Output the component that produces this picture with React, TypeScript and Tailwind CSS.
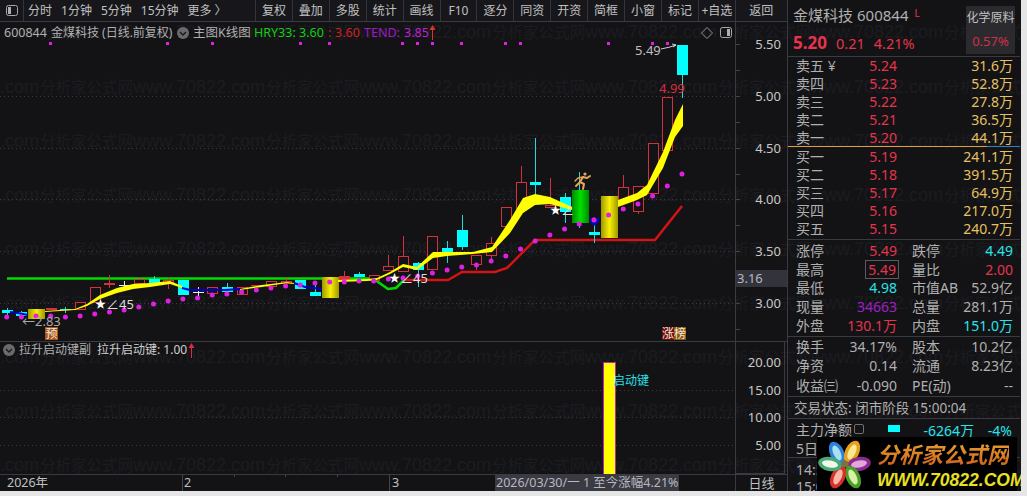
import React from "react";

const X = (i: number) => 6.7 + 14.68 * i;
const CY = "#00ffff";
const RD = "#d4303e";

type C = { i: number; k: "r" | "rf" | "c" | "w"; t: number; b: number; wt?: number; wb?: number };
const candles: C[] = [
  { i: 0, k: "c", t: 310, b: 313, wt: 308, wb: 315 },
  { i: 1, k: "c", t: 312, b: 316, wt: 311, wb: 318 },
  { i: 3, k: "rf", t: 308, b: 310 },
  { i: 4, k: "c", t: 309, b: 310, wt: 307, wb: 313 },
  { i: 5, k: "r", t: 302, b: 309 },
  { i: 6, k: "r", t: 287, b: 302 },
  { i: 7, k: "rf", t: 283, b: 285, wt: 275, wb: 288 },
  { i: 8, k: "w", t: 285, b: 285.5, wt: 281, wb: 290 },
  { i: 9, k: "r", t: 279, b: 283, wt: 277 },
  { i: 10, k: "c", t: 279, b: 285, wt: 276 },
  { i: 11, k: "r", t: 280, b: 283, wt: 277, wb: 289 },
  { i: 12, k: "c", t: 280, b: 295 },
  { i: 13, k: "w", t: 292, b: 292.5, wt: 287, wb: 296 },
  { i: 14, k: "r", t: 287, b: 293 },
  { i: 15, k: "c", t: 287, b: 292, wt: 283, wb: 294 },
  { i: 16, k: "r", t: 287, b: 294 },
  { i: 17, k: "rf", t: 285, b: 286 },
  { i: 18, k: "r", t: 281, b: 286 },
  { i: 19, k: "r", t: 281, b: 283, wt: 277 },
  { i: 20, k: "c", t: 280, b: 289 },
  { i: 21, k: "c", t: 292, b: 296, wt: 282 },
  { i: 23, k: "rf", t: 276, b: 280, wt: 271, wb: 283 },
  { i: 24, k: "c", t: 274, b: 277, wt: 272 },
  { i: 25, k: "r", t: 275, b: 280 },
  { i: 26, k: "r", t: 266, b: 270, wt: 255 },
  { i: 27, k: "r", t: 256, b: 271, wt: 236 },
  { i: 28, k: "c", t: 263, b: 270, wt: 262, wb: 287 },
  { i: 29, k: "r", t: 236, b: 269 },
  { i: 30, k: "c", t: 248, b: 252, wt: 241, wb: 263 },
  { i: 31, k: "c", t: 230, b: 247, wt: 215, wb: 250 },
  { i: 32, k: "r", t: 255, b: 264, wb: 270 },
  { i: 33, k: "r", t: 243, b: 255, wt: 237, wb: 260 },
  { i: 34, k: "r", t: 207, b: 226 },
  { i: 35, k: "r", t: 182, b: 208, wt: 166 },
  { i: 36, k: "c", t: 182, b: 185, wt: 138, wb: 195 },
  { i: 37, k: "r", t: 205, b: 207, wt: 178 },
  { i: 38, k: "c", t: 197, b: 212, wt: 193, wb: 223 },
  { i: 39, k: "c", t: 200, b: 200, wt: 172, wb: 228 },
  { i: 40, k: "c", t: 232, b: 235, wt: 225, wb: 243 },
  { i: 42, k: "r", t: 187, b: 200, wt: 175 },
  { i: 43, k: "r", t: 186, b: 211, wb: 214 },
  { i: 44, k: "r", t: 143, b: 193 },
  { i: 45, k: "r", t: 97, b: 150 },
  { i: 46, k: "c", t: 45, b: 75, wb: 98 },
];

const dots = [317, 317, 316, 316, 317, 316, 314, 312, 310, 307, 304, 301, 299, 298, 295, 294, 292, 290, 288, 286, 285, 283, 282, 282, 281, 281, 279, 278, 276, 273, 270, 267, 265, 261, 256, 249, 241, 235, 229, 224, 220, 215, 209, 204, 196, 186, 174];
const topDots = [50, 167, 212, 300, 329, 402, 417, 432, 461, 505, 520, 608, 652, 667];

const bands: [number, number, number][][] = [
  [[45, 311, 312], [75, 309, 310], [87, 304, 306], [100, 295, 299], [117, 288, 293], [133, 284, 289], [150, 283, 287], [170, 281, 284], [182, 286, 288]],
  [[240, 289, 290], [262, 285, 287], [287, 282, 283], [294, 283, 284]],
  [[338, 280, 282], [367, 279, 281], [377, 278, 280], [390, 272, 274], [403, 264, 267], [417, 267, 270], [433, 252, 258], [447, 252, 256], [473, 252, 254], [492, 247, 252], [510, 220, 233], [523, 198, 213], [535, 194, 205], [550, 197, 204], [572, 207, 210]],
  [[618, 200, 207], [637, 193, 200], [647, 185, 195], [663, 152, 168], [675, 120, 137], [683, 104, 126]],
];
const poly = (b: [number, number, number][]) =>
  b.map((p) => `${p[0]},${p[1]}`).join(" ") + " " + [...b].reverse().map((p) => `${p[0]},${p[2]}`).join(" ");

const wmRows = [32, 87, 141, 195, 249, 303, 357, 411, 465];
const wmCols = [-186, 40, 266, 492, 718, 944];

function Watermark() {
  return (
    <svg className="absolute left-0 top-0 w-[1021px] h-[491px] font-['Liberation_Sans','Noto_Sans_CJK_SC',sans-serif]" viewBox="0 0 1021 491">
      {wmRows.map((y) =>
        wmCols.map((x) => (
          <text key={`${x}-${y}`} x={x} y={y + 6} fill="#1c1c20" fontSize="15.5">
            分析家公式网<tspan fontSize="18">www.70822.com</tspan>
          </text>
        ))
      )}
    </svg>
  );
}

function Circle() {
  return (
    <svg width="12" height="12" viewBox="0 0 12 12" className="shrink-0">
      <circle cx="6" cy="6" r="6" fill="#6a6a6e" />
      <path d="M3 5 L6 8 L9 5" fill="none" stroke="#1a1a1c" strokeWidth="1.4" />
    </svg>
  );
}

function UpArrow({ color }: { color: string }) {
  return (
    <svg width="7" height="15" viewBox="0 0 7 15" className="shrink-0">
      <path d="M3.5 0 L6.5 5 L4 5 L4 15 L3 15 L3 5 L0.5 5 Z" fill={color} />
    </svg>
  );
}

function PanelIcon({ side }: { side: "l" | "r" }) {
  return (
    <svg width="12" height="11" viewBox="0 0 12 11">
      <rect x="0.5" y="0.5" width="11" height="10" rx="2" fill="none" stroke="#a8a8a8" />
      <rect x={side === "l" ? 2 : 7} y="2" width="3" height="7" fill="#b0b0b0" />
    </svg>
  );
}

function Toolbar() {
  const btns = ["复权", "叠加", "多股", "统计", "画线", "F10", "逐分", "同资", "开资", "简框", "小窗", "标记", "+自选"];
  return (
    <div className="flex h-[22px] border-b border-[#3a3a42] bg-[#17171b] text-[12px] text-[#c0c0c0] leading-[21px]">
      <div className="w-[24px] flex items-center justify-center border-r border-[#33343c] pl-[1px]">
        <PanelIcon side="l" />
      </div>
      <div className="w-[232px] flex gap-[9px] pl-[4px] border-r border-[#33343c]">
        <span>分时</span>
        <span>1分钟</span>
        <span>5分钟</span>
        <span>15分钟</span>
        <span>更多 〉</span>
      </div>
      {btns.map((b) => (
        <div key={b} className="w-[36.92px] text-center whitespace-nowrap border-r border-[#33343c]">
          {b}
        </div>
      ))}
      <div className="w-[51px] text-center">返回</div>
    </div>
  );
}

function Header() {
  return (
    <div className="absolute left-[4px] top-[3px] right-0 flex items-center h-[16px] text-[12.5px] text-[#b0b0b0] whitespace-nowrap">
      <span>600844</span>
      <span className="ml-[4px] text-[12px]">金煤科技 (日线.前复权)</span>
      <span className="absolute left-[173px] top-[2px] flex"><Circle /></span>
      <span className="absolute left-[189px] top-0 leading-[16px]">主图K线图</span>
      <span className="absolute left-[250px] top-0 leading-[16px] text-[#10d010]">HRY33:</span>
      <span className="absolute left-[295px] top-0 leading-[16px] text-[#10d010]">3.60</span>
      <span className="absolute left-[324px] top-0 leading-[16px] text-[#d02020]">:</span>
      <span className="absolute left-[331px] top-0 leading-[16px] text-[#d02020]">3.60</span>
      <span className="absolute left-[360px] top-0 leading-[16px] text-[#a018c8]">TEND:</span>
      <span className="absolute left-[400px] top-0 leading-[16px] text-[#c020d8]">3.85</span>
      <span className="absolute left-[425px] top-0 flex"><UpArrow color="#e03030" /></span>
      <svg width="12" height="12" viewBox="0 0 12 12" className="absolute left-[697px] top-[2px]">
        <path d="M6 0.5 L11.5 6 L6 11.5 L0.5 6 Z" fill="none" stroke="#909090" />
      </svg>
      <span className="absolute left-[716px] top-[2px] flex"><PanelIcon side="r" /></span>
    </div>
  );
}

function MainChart() {
  return (
    <svg className="block w-[735px] h-[319px]" viewBox="0 22 735 319">
      <defs>
        <linearGradient id="gold" x1="0" x2="1" y1="0" y2="0">
          <stop offset="0" stopColor="#a09800" />
          <stop offset="0.5" stopColor="#f8f000" />
          <stop offset="1" stopColor="#a09800" />
        </linearGradient>
        <linearGradient id="grn" x1="0" x2="1" y1="0" y2="0">
          <stop offset="0" stopColor="#008a00" />
          <stop offset="0.5" stopColor="#00e000" />
          <stop offset="1" stopColor="#008a00" />
        </linearGradient>
      </defs>
      {[96, 148, 199, 251, 303].map((y) => (
        <line key={y} x1="0" x2="735" y1={y + 0.5} y2={y + 0.5} stroke="#3a3a40" strokeDasharray="1 3" />
      ))}
      {topDots.map((x) => (
        <rect key={x} x={x - 1} y="42" width="3" height="3" fill="#e020e0" />
      ))}
      <polyline points="7,278.5 373,278.5 388,289 396,288 404,280" fill="none" stroke="#00dc00" strokeWidth="2.5" />
      <polyline points="404,280 448,280 462,272 495,272 507,268 535,240 655,240 682,206" fill="none" stroke="#d41414" strokeWidth="2.5" />
      {candles.map((c) => {
        const col = c.k === "c" ? CY : c.k === "w" ? "#e8e8e8" : RD;
        const x = Math.round(X(c.i));
        return (
          <g key={c.i} shapeRendering="crispEdges">
            {c.wt !== undefined && <line x1={x + 0.5} x2={x + 0.5} y1={c.wt} y2={c.t} stroke={c.k === "c" ? "#28d8d8" : col} />}
            {c.wb !== undefined && <line x1={x + 0.5} x2={x + 0.5} y1={c.b} y2={c.wb} stroke={c.k === "c" ? "#28d8d8" : col} />}
            {c.k === "r" ? (
              <rect x={x - 4.5} y={c.t + 0.5} width="10" height={c.b - c.t} fill="#131316" stroke={col} />
            ) : (
              <rect x={x - 5} y={c.t} width="11" height={Math.max(c.b - c.t, 1)} fill={col} />
            )}
          </g>
        );
      })}
      <polyline points="10,312 18,313 28,315" fill="none" stroke="#0000c8" strokeWidth="2" />
      <polyline points="182,288 190,290 205,290 225,290 240,289" fill="none" stroke="#0000c8" strokeWidth="2" />
      <polyline points="294,283 305,287 322,289" fill="none" stroke="#0000c8" strokeWidth="2" />
      <rect x="28" y="309" width="17" height="10" fill="url(#gold)" />
      <rect x="322" y="277" width="17" height="21" fill="url(#gold)" />
      <rect x="572" y="190" width="17" height="33" fill="url(#grn)" />
      <rect x="601" y="196" width="17" height="42" fill="url(#gold)" />
      {bands.map((b, i) => (
        <polygon key={i} points={poly(b)} fill="#ffff00" />
      ))}
      {dots.map((y, i) => (
        <circle key={i} cx={X(i)} cy={y} r="2.5" fill="#e020e0" />
      ))}
      <path d="M589 217 L594 220 L600 217 L599 222 L594 226 L590 222 Z" fill="#0808b8" />
      <circle cx="594" cy="220" r="2.5" fill="#e020e0" />

      <g fill="#dcdcdc" fontSize="13">
        <text x="95" y="308" fill="#ffffff" fontSize="11">★</text>
        <text x="106" y="309">∠45</text>
        <text x="389" y="282" fill="#ffffff" fontSize="11">★</text>
        <text x="400" y="283">∠45</text>
        <text x="550" y="214" fill="#ffffff" fontSize="11">★</text>
        <text x="561" y="215">∠</text>
        <text x="22" y="326" fill="#a8a8a8">←2.83</text>
        <text x="635" y="55" fill="#c0c0c0">5.49</text>
        <text x="659" y="93" fill="#d82c3c">4.99</text>
      </g>
      <path d="M661 49 L670 47 M670 47 L676 45 M672 44 L676 45 L673 47" fill="none" stroke="#d0d0d0" />

      <rect x="45" y="327" width="13" height="13" fill="#a8521c" />
      <text x="45.5" y="338" fill="#f4e8d8" fontSize="12">预</text>
      <rect x="662" y="327" width="12" height="13" fill="#6e0c10" />
      <rect x="674" y="327" width="12" height="13" fill="#8a5a10" />
      <text x="662" y="338" fill="#f4e8d8" fontSize="12">涨</text>
      <text x="674" y="338" fill="#f4e8d8" fontSize="12">榜</text>

      <g fill="none" stroke="#e8a458" strokeWidth="2" strokeLinecap="round" strokeLinejoin="round">
        <circle cx="585" cy="174" r="1.6" fill="#e8a458" stroke="none" />
        <path d="M583 177 L580 182 L576 186" />
        <path d="M583 177 L587 178 L590 176" />
        <path d="M580 182 L584 184 L583 189" />
        <path d="M583 177 L578 178 L575 181" strokeWidth="1.4" />
      </g>
    </svg>
  );
}

function MainAxis() {
  const ys = [44, 70, 96, 122, 148, 174, 199, 225, 251, 277, 303, 329];
  return (
    <div className="relative w-[52px] border-l border-[#3a3a42]">
      <svg className="block w-[51px] h-[319px]" viewBox="736 22 51 319">
        {ys.map((y) => (
          <line key={y} x1="736" x2="740" y1={y + 0.5} y2={y + 0.5} stroke="#44444c" />
        ))}
        {[
          ["5.50", 49],
          ["5.00", 101],
          ["4.50", 153],
          ["4.00", 204],
          ["3.50", 256],
          ["3.00", 308],
        ].map(([t, y]) => (
          <text key={t} x="781" y={y} textAnchor="end" fill="#c8c8c8" fontSize="13">
            {t}
          </text>
        ))}
      </svg>
      <div className="absolute left-0 right-0 top-[248px] h-[17px] bg-[#33333c] pl-[1px] text-[13px] leading-[17px] text-[#b8b8c4]">3.16</div>
    </div>
  );
}

function SubChart() {
  return (
    <div className="relative h-[133px] flex border-b border-[#3a3a42]">
      <div className="relative w-[735px]">
        <svg className="block w-[735px] h-[132px]" viewBox="0 342 735 132">
          {[390, 417, 445].map((y) => (
            <line key={y} x1="0" x2="735" y1={y + 0.5} y2={y + 0.5} stroke="#3a3a40" strokeDasharray="1 3" />
          ))}
          <rect x="603.5" y="362" width="12" height="113" fill="#ffff00" stroke="#c020c0" shapeRendering="crispEdges" />
          <text x="613" y="385" fill="#28e0e8" fontSize="12">启动键</text>
        </svg>
        <div className="absolute left-[3px] top-0 h-[16px] flex items-center text-[12px] whitespace-nowrap">
          <Circle />
          <span className="ml-[4px] text-[#b0b0b0]">拉升启动键副</span>
          <span className="ml-[6px] text-[#d0d0d0]">拉升启动键: 1.00</span>
          <span className="ml-[1px]"><UpArrow color="#e0284a" /></span>
        </div>
      </div>
      <div className="w-[50px] border border-[#3a3a42] -mt-px">
        <svg className="block w-[48px] h-[131px]" viewBox="736 342 48 131">
          {[
            ["20.00", 367],
            ["15.00", 395],
            ["10.00", 422],
            ["5.00", 450],
          ].map(([t, y]) => (
            <text key={t} x="781" y={y} textAnchor="end" fill="#c8c8c8" fontSize="13">
              {t}
            </text>
          ))}
        </svg>
      </div>
    </div>
  );
}

function TimeAxis() {
  return (
    <div className="relative flex h-[16px] text-[12.5px] leading-[16px] text-[#c0c0c0]">
      <div className="relative w-[735px]">
        <span className="absolute left-[7px] top-0">2026年</span>
        <span className="absolute left-[182px] top-0 h-[16px] border-l border-[#44444c] pl-[1px]">2</span>
        <span className="absolute left-[234px] top-0 h-[2px] border-l border-[#44444c]" />
        <span className="absolute left-[285px] top-0 h-[2px] border-l border-[#44444c]" />
        <span className="absolute left-[337px] top-0 h-[2px] border-l border-[#44444c]" />
        <span className="absolute left-[389px] top-0 h-[16px] border-l border-[#44444c] pl-[2px]">3</span>
        <span className="absolute left-[495px] top-0 h-[16px] w-[184px] bg-[#3a3a42] pl-[1px] text-[#b8b8c0] whitespace-nowrap">2026/03/30/一 1 至今涨幅4.21%</span>
      </div>
      <div className="w-[52px] border-l border-[#3a3a42] text-center text-[13px]">日线</div>
    </div>
  );
}

const Row2 = ({ className, children }: { className: string; children: React.ReactNode }) => (
  <div className={`grid grid-cols-[101px_101px] gap-x-[15px] pl-2 items-center text-[14px] leading-[17px] whitespace-nowrap ${className}`}>{children}</div>
);

const Cell = ({ l, v, c, boxed }: { l: string; v: string; c: string; boxed?: boolean }) => (
  <div className="flex justify-between items-center">
    <span className="text-[#b0b0b0]">{l}</span>
    <span className={`${c} ${boxed ? "border border-[#5a5a60] px-[2px] -mr-[2px] leading-[17px]" : ""}`}>{v}</span>
  </div>
);

const RED = "text-[#e6344c]";
const GOLD = "text-[#e8c060]";
const TEAL = "text-[#28e4ea]";
const GRAY = "text-[#b0b0b0]";

function Quote({ l, p, q }: { l: string; p: string; q: string }) {
  return (
    <Row2 className="h-[17.8px]">
      <Cell l={l} v={p} c={RED} />
      <div className={`text-right ${GOLD}`}>{q}</div>
    </Row2>
  );
}

function Logo() {
  const petals = [
    { cx: 837, cy: 453, a: -25, o: "#2f80d8", i: "#a8e0f0" },
    { cx: 852, cy: 452, a: 25, o: "#e8a020", i: "#f8e890" },
    { cx: 859, cy: 464, a: 80, o: "#8c2a90", i: "#e0a8d8" },
    { cx: 853, cy: 477, a: -25, o: "#48a028", i: "#d8f0a8" },
    { cx: 838, cy: 477, a: 25, o: "#d8302c", i: "#f8b8a8" },
    { cx: 830, cy: 464, a: -80, o: "#48a878", i: "#f0f8e8" },
  ];
  return (
    <div className="absolute left-[817px] top-[437px] w-[200px] h-[54px] bg-black font-['Liberation_Sans','Noto_Sans_CJK_SC',sans-serif]">
      <svg className="absolute left-0 top-0 w-[60px] h-[54px]" viewBox="817 437 60 54">
        {petals.map((p, i) => (
          <g key={i} transform={`rotate(${p.a} ${p.cx} ${p.cy})`}>
            <ellipse cx={p.cx} cy={p.cy} rx="7" ry="12" fill={p.o} />
            <ellipse cx={p.cx} cy={p.cy} rx="3.6" ry="8" fill={p.i} />
          </g>
        ))}
        <circle cx="845" cy="464" r="3.5" fill="#807040" />
      </svg>
      <div className="absolute left-[60px] top-[5px] text-[22px] leading-[28px] font-bold italic whitespace-nowrap text-transparent bg-clip-text bg-linear-to-b from-[#e8a030] to-[#c8581c]">
        分析家公式网
      </div>
      <div className="absolute left-[60px] top-[33px] text-[17.5px] leading-[20px] font-bold italic whitespace-nowrap text-[#e8e020]">
        WWW.70822.COM
      </div>
    </div>
  );
}

function Sidebar() {
  return (
    <aside className="relative w-[233px] border-l border-[#3a3a42] text-[14px] overflow-hidden">
      <div className="relative h-[57px] border-b border-[#3a3a42] pl-[5px] pt-[6px]">
        <div className="flex items-center h-[18px] text-[15px] text-[#b0b0b0] whitespace-nowrap">
          <span>金煤科技</span>
          <span className="ml-[4px]">600844</span>
          <span className="ml-[6px] -mt-[3px] text-[10px] text-[#e6344c]">L</span>
        </div>
        <div className="flex items-baseline mt-[6px] h-[20px] whitespace-nowrap text-[#e6344c]">
          <span className="text-[17px] font-bold">5.20</span>
          <span className="ml-[9px] text-[14.5px]">0.21</span>
          <span className="ml-[9px] text-[14.5px]">4.21%</span>
        </div>
        <div className="absolute left-[178px] top-[6px] w-[49px] h-[48px] bg-[#2b2b2f] text-center">
          <div className="text-[12px] leading-[24px] text-[#c0c0c0]">化学原料</div>
          <div className="text-[13px] leading-[22px] text-[#d0304a]">0.57%</div>
        </div>
      </div>
      <Quote l="卖五 ¥" p="5.24" q="31.6万" />
      <Quote l="卖四" p="5.23" q="52.8万" />
      <Quote l="卖三" p="5.22" q="27.8万" />
      <Quote l="卖二" p="5.21" q="36.5万" />
      <Quote l="卖一" p="5.20" q="44.1万" />
      <div className="flex h-px mt-[0px]">
        <div className="w-[199px] bg-[#e0a040]" />
        <div className="w-[33px] bg-[#3080c0]" />
      </div>
      <div className="pt-[1px]">
        <Quote l="买一" p="5.19" q="241.1万" />
        <Quote l="买二" p="5.18" q="391.5万" />
        <Quote l="买三" p="5.17" q="64.9万" />
        <Quote l="买四" p="5.16" q="217.0万" />
        <Quote l="买五" p="5.15" q="240.7万" />
      </div>
      <div className="mt-[2px] border-t border-[#3a3a42] pt-[1px]">
        {[
          [["涨停", "5.49", RED], ["跌停", "4.49", TEAL]],
          [["最高", "5.49", RED, true], ["量比", "2.00", RED]],
          [["最低", "4.98", TEAL], ["市值AB", "52.9亿", GRAY]],
          [["现量", "34663", "text-[#a020c8]"], ["总量", "281.1万", GRAY]],
          [["外盘", "130.1万", RED], ["内盘", "151.0万", TEAL]],
        ].map((r, i) => (
          <Row2 key={i} className="h-[18.75px]">
            {r.map((c, j) => (
              <Cell key={j} l={c[0] as string} v={c[1] as string} c={c[2] as string} boxed={c[3] as boolean} />
            ))}
          </Row2>
        ))}
      </div>
      <div className="mt-[1px] border-t border-[#3a3a42]">
        {[
          [["换手", "34.17%", GRAY], ["股本", "10.2亿", GRAY]],
          [["净资", "0.14", GRAY], ["流通", "8.23亿", GRAY]],
          [["收益㈢", "-0.090", GRAY], ["PE(动)", "--", GRAY]],
        ].map((r, i) => (
          <Row2 key={i} className="h-[19.5px]">
            {r.map((c, j) => (
              <Cell key={j} l={c[0]} v={c[1]} c={c[2]} />
            ))}
          </Row2>
        ))}
      </div>
      <div className="mt-[1px] h-[23px] border-y border-[#3a3a42] pl-[6px] text-[13.5px] leading-[22px] text-[#b0b0b0] whitespace-nowrap">
        交易状态: 闭市阶段 15:00:04
      </div>
      <div className="relative h-[20px] pl-2 flex items-center text-[#b0b0b0]">
        <span>主力净额</span>
        <span className="ml-[2px] w-[10px] h-[10px] border border-[#707070] rounded-[2px]" />
        <span className="absolute left-[100px] top-[6px] w-[12px] h-[7px] bg-[#00ffff]" />
        <span className={`absolute right-[46px] top-[1px] ${TEAL}`}>-6264万</span>
        <span className={`absolute right-[8px] top-[1px] ${TEAL}`}>-4%</span>
      </div>
      <div className="h-[19px] pl-2 leading-[19px] text-[#b0b0b0] border-b border-[#3a3a42]">5日主力净额</div>
      <div className="h-[21px] pl-2 pt-[2px] leading-[19px] text-[#b0b0b0]">14:57</div>
      <div className="h-[16px] pl-2 leading-[16px] text-[#b0b0b0]">15:00</div>
    </aside>
  );
}

export default function App() {
  return (
    <div className="relative w-[1027px] h-[496px] bg-[#e6e6e6] overflow-hidden font-['Noto_Sans','Noto_Sans_CJK_SC',sans-serif]">
      <div className="relative w-[1021px] h-[491px] bg-[#131316] overflow-hidden">
        <Watermark />
        <div className="relative flex h-full">
          <main className="w-[787px] flex flex-col">
            <Toolbar />
            <div className="flex h-[320px] border-b border-[#3a3a42]">
              <div className="relative w-[735px]">
                <MainChart />
                <Header />
              </div>
              <MainAxis />
            </div>
            <SubChart />
            <TimeAxis />
          </main>
          <Sidebar />
        </div>
        <Logo />
      </div>
    </div>
  );
}
